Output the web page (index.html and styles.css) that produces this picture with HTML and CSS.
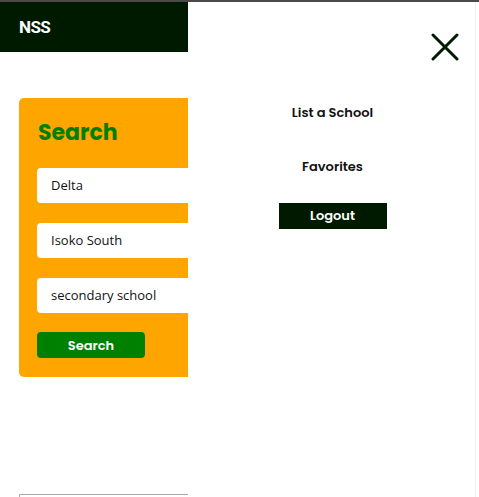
FILE: index.html
```html
<!DOCTYPE html>
<html lang="en">
<head>
<meta charset="utf-8">
<title>NSS</title>
<link rel="stylesheet" href="styles.css">
</head>
<body>
<div class="page">
  <header class="topbar">
    <span class="brand">NSS</span>
  </header>
  <main class="main">
    <section class="card">
      <h2 class="card-title">Search</h2>
      <div class="field">Delta</div>
      <div class="field">Isoko South</div>
      <div class="field">secondary school</div>
      <button class="btn-search">Search</button>
    </section>
    <div class="results"></div>
  </main>
</div>
<nav class="drawer">
  <button class="close" aria-label="Close">
    <svg width="28" height="28" viewBox="0 0 28 28"><path d="M2 2 L26 26 M26 2 L2 26" stroke="#001a00" stroke-width="3" stroke-linecap="round" fill="none"/></svg>
  </button>
  <ul class="menu">
    <li class="menu-item">List a School</li>
    <li class="menu-item">Favorites</li>
    <li><button class="btn-logout">Logout</button></li>
  </ul>
</nav>
</body>
</html>
```
FILE: styles.css
```css
* { box-sizing: border-box; }
html, body { margin: 0; padding: 0; }
html { overflow: hidden; }
body {
  background: #fff;
  border-top: 2px solid #4a4a4a;
  font-family: "Poppins", "Inter", sans-serif;
  overflow: hidden;
  height: 497px;
}
.topbar {
  height: 50px;
  background: #001a00;
  display: flex;
  align-items: center;
  padding-left: 19px;
}
.brand {
  color: #fff;
  font-family: "Roboto", sans-serif;
  font-weight: 700;
  font-size: 17px;
  letter-spacing: -0.6px;
}
.main { padding: 46px 19px 0; }
.card {
  background: #ffa500;
  border-radius: 5px;
  padding: 18px 18px 19px;
  display: flex;
  flex-direction: column;
  align-items: flex-start;
}
.card-title {
  margin: 0 0 19px 1px;
  color: #008000;
  font-size: 22px;
  font-weight: 700;
  line-height: 33px;
}
.field {
  width: 100%;
  height: 35px;
  background: #fff;
  border-radius: 4px;
  margin-bottom: 20px;
  padding-left: 14px;
  padding-bottom: 1px;
  display: flex;
  align-items: center;
  font-family: "Open Sans", sans-serif;
  font-size: 13px;
  color: #111;
}
.field:nth-of-type(3) { margin-bottom: 19px; }
.btn-search {
  width: 108px;
  height: 26px;
  border: 0;
  border-radius: 4px;
  background: #008000;
  color: #fff;
  font-family: "Poppins", "Inter", sans-serif;
  font-weight: 600;
  font-size: 13px;
  padding: 2px 0 0;
}
.results {
  margin-top: 117px;
  height: 3px;
  border: 1px solid #aaa;
  border-bottom: 0;
}
.drawer {
  position: fixed;
  top: 2px;
  left: 188px;
  right: 0;
  bottom: 0;
  background: #fff;
}
.drawer::after {
  content: "";
  position: absolute;
  top: 0;
  bottom: 0;
  left: 287px;
  width: 1px;
  background: #f0f0f0;
}
.close {
  position: absolute;
  left: 243px;
  top: 31px;
  width: 28px;
  height: 28px;
  padding: 0;
  border: 0;
  background: none;
}
.close svg { display: block; }
.menu {
  list-style: none;
  margin: 0;
  padding: 101px 2px 0 0;
  display: flex;
  flex-direction: column;
  align-items: center;
}
.menu-item {
  font-size: 13px;
  font-weight: 600;
  color: #111;
  line-height: 20px;
  margin-bottom: 34px;
}
.menu-item:nth-child(2) { margin-bottom: 25px; }
.btn-logout {
  width: 108px;
  height: 26px;
  border: 0;
  background: #001a00;
  color: #fff;
  font-family: "Poppins", "Inter", sans-serif;
  font-weight: 600;
  font-size: 13px;
  padding: 0;
}
```
